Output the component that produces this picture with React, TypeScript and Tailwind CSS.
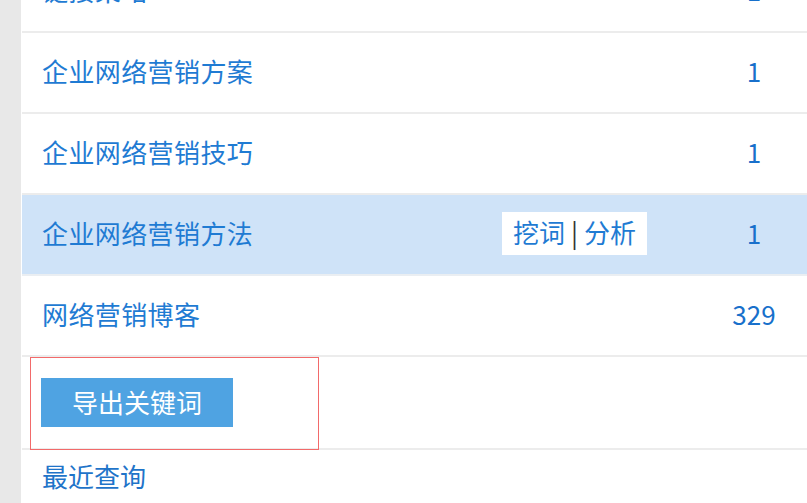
const rows = [
  { name: "链接策略", count: "1" },
  { name: "企业网络营销方案", count: "1" },
  { name: "企业网络营销技巧", count: "1" },
  { name: "企业网络营销方法", count: "1", active: true },
  { name: "网络营销博客", count: "329" },
];

const font = "font-['Microsoft_YaHei','Noto_Sans_CJK_SC',sans-serif]";

const App = () => {
  return (
    <div className={`flex h-[503px] w-[807px] overflow-hidden bg-white ${font}`}>
      <div className="w-[21px] shrink-0 bg-[#e8e8e8]" />
      <div className="flex-1 -mt-[48px] pl-[1px]">
        {rows.map((r) => (
          <div
            key={r.name}
            className={`flex h-[81px] items-center border-b-2 pb-[5px] pl-[20px] pr-[18px] text-[26px] text-[#1f7bd3] ${
              r.active ? "border-[#eaeef2] bg-[#cfe3f8]" : "border-[#ececec]"
            }`}
          >
            <span className="flex-1 tracking-[0.4px]">{r.name}</span>
            {r.active && (
              <div className="mr-[72px] mt-[3px] flex h-[43px] items-center bg-white px-[11px] pb-[4px] text-[26px] text-[#1f7bd3]">
                <span>挖词</span>
                <span className="mx-[6px] text-[#333]">|</span>
                <span>分析</span>
              </div>
            )}
            <span className="w-[70px] text-center text-[#1870cb]">{r.count}</span>
          </div>
        ))}
        <div className="h-[93px] border-b-2 border-[#ececec] pl-[8px]">
          <div className="h-[93px] w-[289px] border border-[#f26a6a] pl-[10px] pt-[20px]">
            <button className="flex h-[49px] w-[192px] items-center justify-center bg-[#4fa3e2] pb-[3px] text-[26px] text-white">
              导出关键词
            </button>
          </div>
        </div>
        <div className="flex h-[58px] items-center pb-[8px] pl-[20px] text-[26px] text-[#1f74c9]">
          最近查询
        </div>
      </div>
    </div>
  );
};

export default App;
